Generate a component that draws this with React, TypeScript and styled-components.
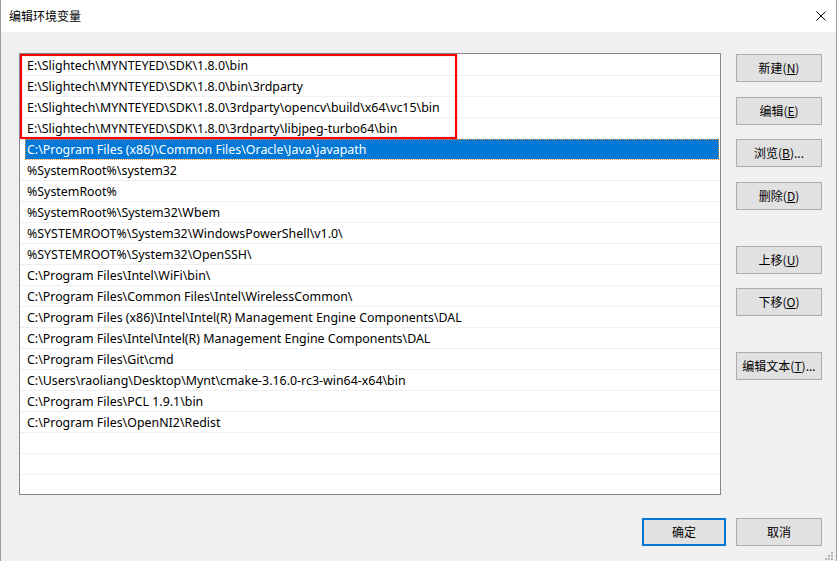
import styled, { createGlobalStyle } from "styled-components";

const GlobalStyle = createGlobalStyle`
  html, body {
    margin: 0;
    padding: 0;
    background: #f0f0f0;
  }
  body {
    font-family: "Noto Sans", "Noto Sans CJK SC", sans-serif;
    font-size: 12px;
    color: #000;
  }
`;

const Window = styled.div`
  width: 837px;
  height: 561px;
  box-sizing: border-box;
  border-left: 1px solid #9a9a9a;
  border-right: 1px solid #9a9a9a;
  display: flex;
  flex-direction: column;
  position: relative;
  overflow: hidden;
  background: #f0f0f0;
`;

const TitleBar = styled.div`
  height: 32px;
  flex: none;
  background: #fff;
  display: flex;
  align-items: center;
  justify-content: space-between;
  padding: 0 10px 0 8px;
`;

const Title = styled.span`
  font-family: "Noto Sans CJK SC", sans-serif;
  font-size: 12px;
  line-height: 1;
`;

const CloseButton = styled.div`
  width: 10px;
  height: 10px;
  display: flex;
  svg {
    display: block;
  }
`;

const Body = styled.div`
  flex: 1;
  display: flex;
  flex-direction: column;
  padding: 21px 14px 15px 18px;
`;

const Main = styled.div`
  display: flex;
  gap: 15px;
`;

const ListBox = styled.div`
  width: 702px;
  height: 442px;
  box-sizing: border-box;
  border: 1px solid #828790;
  background: #fff;
  padding-top: 1px;
  overflow: hidden;
  position: relative;
`;

const Row = styled.div<{ $selected?: boolean }>`
  height: 21px;
  box-sizing: border-box;
  border-bottom: 1px solid #f0f0f0;
  display: flex;
  align-items: center;
  padding-left: ${(p) => (p.$selected ? "2px" : "7px")};
  margin: ${(p) => (p.$selected ? "0 1px 0 5px" : "0")};
  white-space: nowrap;
  font-family: "Noto Sans", sans-serif;
  font-size: 12.4px;
  background: ${(p) => (p.$selected ? "#0078d7" : "transparent")};
  color: ${(p) => (p.$selected ? "#fff" : "#000")};
  outline: ${(p) => (p.$selected ? "1px dotted #f39a3c" : "none")};
  outline-offset: -1px;
`;

const Highlight = styled.div`
  position: absolute;
  left: 0;
  top: 0;
  width: 437px;
  height: 85px;
  box-sizing: border-box;
  border: 2px solid #f00;
  box-shadow: 0 0 1px rgba(255, 0, 0, 0.6), inset 0 0 1px rgba(255, 0, 0, 0.6);
  pointer-events: none;
`;

const ButtonColumn = styled.div`
  display: flex;
  flex-direction: column;
  padding-top: 1px;
`;

const Button = styled.button<{ $mt?: number; $primary?: boolean; $w?: number }>`
  width: ${(p) => p.$w ?? 86}px;
  height: 28px;
  margin-top: ${(p) => p.$mt ?? 0}px;
  box-sizing: border-box;
  background: #e1e1e1;
  border: ${(p) => (p.$primary ? "2px solid #0078d7" : "1px solid #adadad")};
  padding: 0 0 2px;
  font-family: "Noto Sans CJK SC", sans-serif;
  font-size: 12px;
  color: #000;
  display: flex;
  align-items: center;
  justify-content: center;
  u {
    text-underline-offset: 1px;
  }
`;

const Footer = styled.div`
  margin-top: 23px;
  display: flex;
  justify-content: flex-end;
  gap: 10px;
`;

const Grip = styled.svg`
  position: absolute;
  right: 2px;
  bottom: 0;
`;

const paths = [
  "E:\\Slightech\\MYNTEYED\\SDK\\1.8.0\\bin",
  "E:\\Slightech\\MYNTEYED\\SDK\\1.8.0\\bin\\3rdparty",
  "E:\\Slightech\\MYNTEYED\\SDK\\1.8.0\\3rdparty\\opencv\\build\\x64\\vc15\\bin",
  "E:\\Slightech\\MYNTEYED\\SDK\\1.8.0\\3rdparty\\libjpeg-turbo64\\bin",
  "C:\\Program Files (x86)\\Common Files\\Oracle\\Java\\javapath",
  "%SystemRoot%\\system32",
  "%SystemRoot%",
  "%SystemRoot%\\System32\\Wbem",
  "%SYSTEMROOT%\\System32\\WindowsPowerShell\\v1.0\\",
  "%SYSTEMROOT%\\System32\\OpenSSH\\",
  "C:\\Program Files\\Intel\\WiFi\\bin\\",
  "C:\\Program Files\\Common Files\\Intel\\WirelessCommon\\",
  "C:\\Program Files (x86)\\Intel\\Intel(R) Management Engine Components\\DAL",
  "C:\\Program Files\\Intel\\Intel(R) Management Engine Components\\DAL",
  "C:\\Program Files\\Git\\cmd",
  "C:\\Users\\raoliang\\Desktop\\Mynt\\cmake-3.16.0-rc3-win64-x64\\bin",
  "C:\\Program Files\\PCL 1.9.1\\bin",
  "C:\\Program Files\\OpenNI2\\Redist",
  "",
  "",
  "",
];

const sideButtons = [
  { label: "新建", key: "N", mt: 0 },
  { label: "编辑", key: "E", mt: 15 },
  { label: "浏览", key: "B", mt: 14, dots: true },
  { label: "删除", key: "D", mt: 15 },
  { label: "上移", key: "U", mt: 36 },
  { label: "下移", key: "O", mt: 14 },
  { label: "编辑文本", key: "T", mt: 36, dots: true },
];

export default function App() {
  return (
    <>
      <GlobalStyle />
      <Window>
        <TitleBar>
          <Title>编辑环境变量</Title>
          <CloseButton>
            <svg width="10" height="10" viewBox="0 0 10 10">
              <path d="M0.5 0.5 L9.5 9.5 M9.5 0.5 L0.5 9.5" stroke="#000" strokeWidth="1" />
            </svg>
          </CloseButton>
        </TitleBar>
        <Body>
          <Main>
            <ListBox>
              {paths.map((p, i) => (
                <Row key={i} $selected={i === 4}>
                  {p}
                </Row>
              ))}
              <Highlight />
            </ListBox>
            <ButtonColumn>
              {sideButtons.map((b) => (
                <Button key={b.label} $mt={b.mt}>
                  {b.label}(<u>{b.key}</u>){b.dots ? "..." : ""}
                </Button>
              ))}
            </ButtonColumn>
          </Main>
          <Footer>
            <Button $primary $w={84}>确定</Button>
            <Button>取消</Button>
          </Footer>
        </Body>
        <Grip width="10" height="10" viewBox="0 0 10 10">
          <g fill="#b4b4b4">
            <rect x="7" y="1" width="2" height="2" />
            <rect x="4" y="4" width="2" height="2" />
            <rect x="7" y="4" width="2" height="2" />
            <rect x="1" y="7" width="2" height="2" />
            <rect x="4" y="7" width="2" height="2" />
            <rect x="7" y="7" width="2" height="2" />
          </g>
        </Grip>
      </Window>
    </>
  );
}
